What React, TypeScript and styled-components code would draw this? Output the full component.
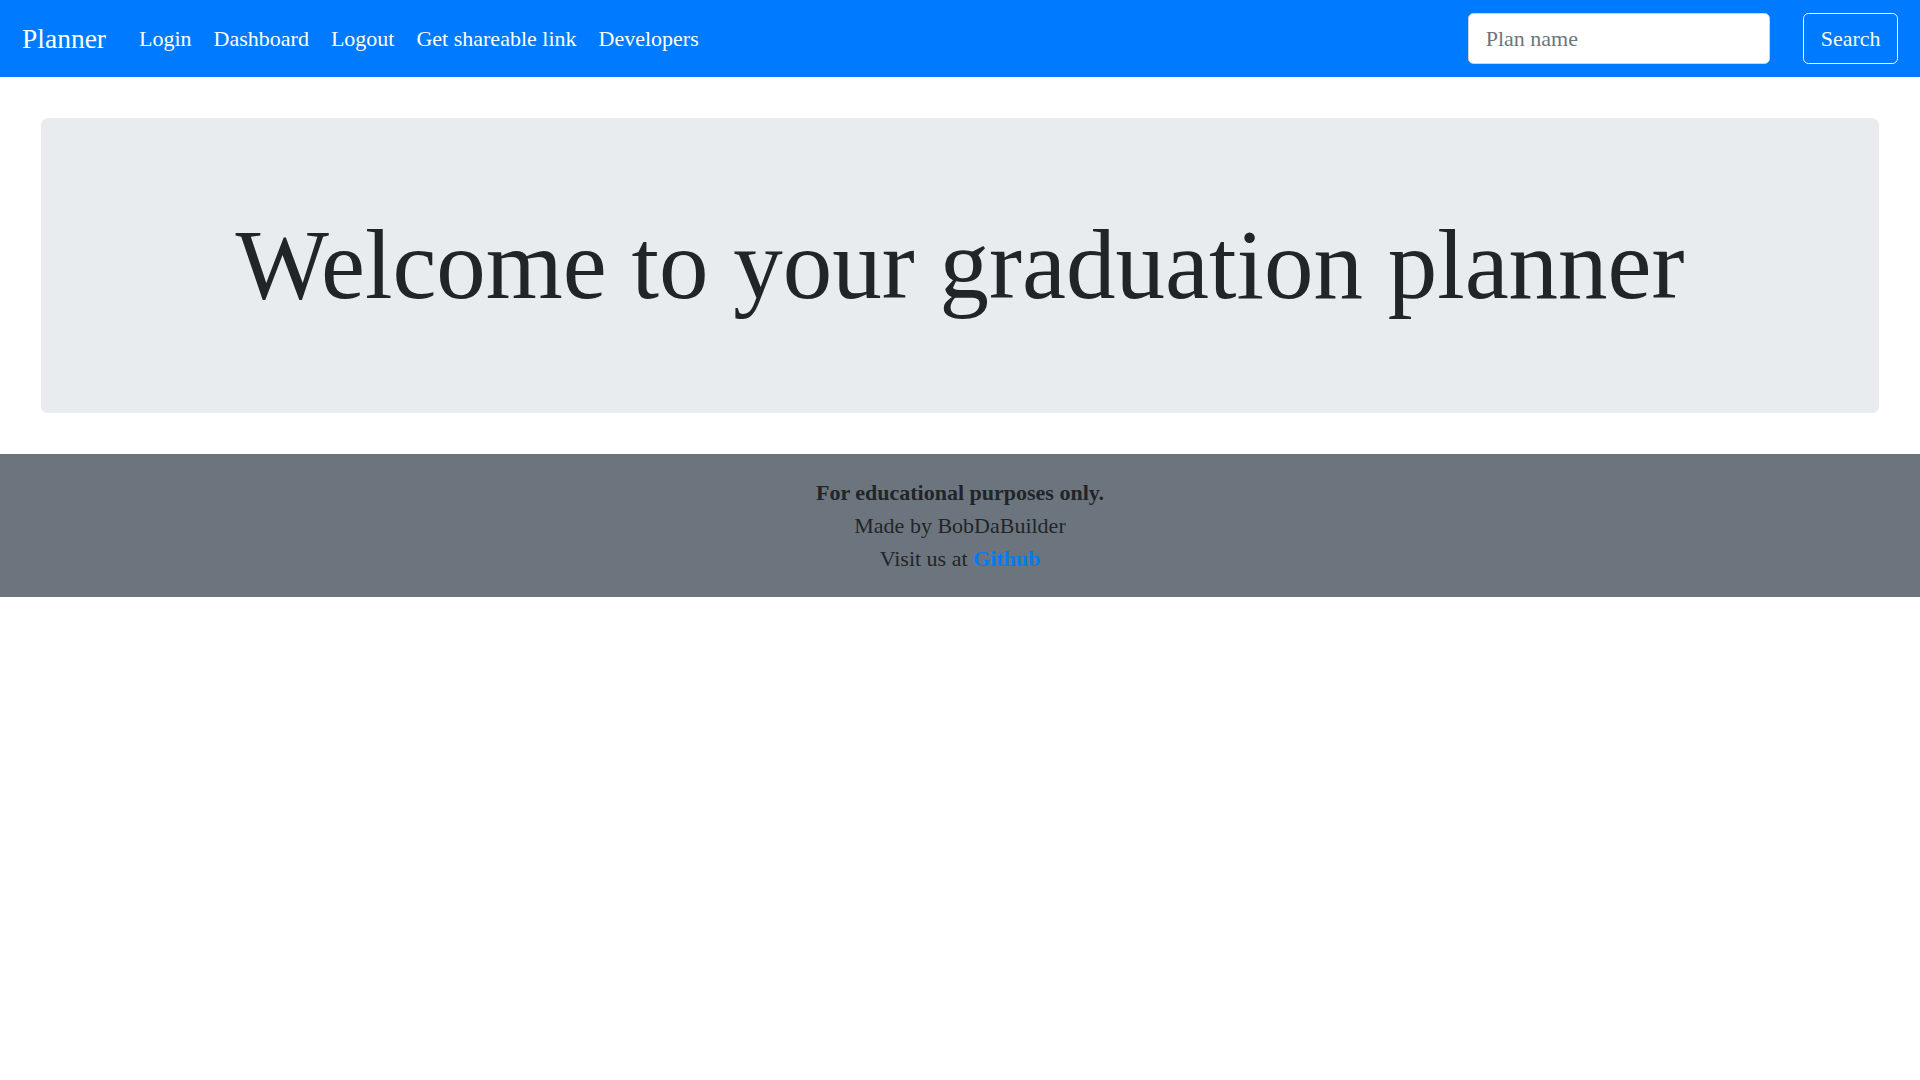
import React from "react";
import styled, { createGlobalStyle } from "styled-components";

const GlobalStyle = createGlobalStyle`
  html, body {
    margin: 0;
    padding: 0;
    background: #ffffff;
  }
  body {
    font-family: "Liberation Serif", "Times New Roman", serif;
    font-size: 22px;
    line-height: 1.5;
    color: #212529;
  }
  * { box-sizing: border-box; }
`;

const NavBar = styled.nav`
  display: flex;
  align-items: center;
  justify-content: space-between;
  background: #007bff;
  padding: 11px 22px;
  height: 77px;
`;

const NavLeft = styled.div`
  display: flex;
  align-items: center;
`;

const Brand = styled.a`
  color: #ffffff;
  font-size: 27.5px;
  line-height: 41.25px;
  padding: 6.875px 0;
  margin-right: 22px;
  text-decoration: none;
  white-space: nowrap;
`;

const NavLinks = styled.ul`
  display: flex;
  list-style: none;
  margin: 0;
  padding: 0;
`;

const NavLink = styled.a`
  display: block;
  color: #ffffff;
  padding: 11px;
  line-height: 33px;
  text-decoration: none;
  white-space: nowrap;
`;

const SearchForm = styled.form`
  display: flex;
  align-items: center;
  gap: 33px;
`;

const SearchInput = styled.input`
  width: 302px;
  height: 51.5px;
  padding: 8.25px 16.5px;
  font-family: "Liberation Serif", "Times New Roman", serif;
  font-size: 22px;
  line-height: 1.5;
  color: #495057;
  background: #ffffff;
  border: 1px solid #ced4da;
  border-radius: 5.5px;
  outline: none;
  &::placeholder {
    color: #6c757d;
    opacity: 1;
  }
`;

const SearchButton = styled.button`
  height: 51.5px;
  padding: 8.25px 16.5px;
  font-family: "Liberation Serif", "Times New Roman", serif;
  font-size: 22px;
  line-height: 1.5;
  color: #f8f9fa;
  background: transparent;
  border: 1px solid #f8f9fa;
  border-radius: 5.5px;
  cursor: pointer;
`;

const Jumbotron = styled.section`
  margin: 41px;
  padding: 88px 44px;
  background: #e9ecef;
  border-radius: 6.6px;
  text-align: center;
`;

const Heading = styled.h1`
  margin: 0;
  font-size: 99px;
  font-weight: 400;
  line-height: 1.2;
  color: #212529;
`;

const Footer = styled.footer`
  background: #6c757d;
  padding: 22px;
  text-align: center;
  color: #212529;
`;

const FooterLine = styled.p<{ $bold?: boolean }>`
  margin: 0;
  line-height: 33px;
  font-weight: ${(p) => (p.$bold ? 700 : 400)};
`;

const FooterLink = styled.a`
  color: #007bff;
  font-weight: 700;
  text-decoration: none;
`;

export default function App() {
  const links = ["Login", "Dashboard", "Logout", "Get shareable link", "Developers"];
  return (
    <>
      <GlobalStyle />
      <NavBar>
        <NavLeft>
          <Brand href="#">Planner</Brand>
          <NavLinks>
            {links.map((l) => (
              <li key={l}>
                <NavLink href="#">{l}</NavLink>
              </li>
            ))}
          </NavLinks>
        </NavLeft>
        <SearchForm onSubmit={(e) => e.preventDefault()}>
          <SearchInput type="search" placeholder="Plan name" />
          <SearchButton type="submit">Search</SearchButton>
        </SearchForm>
      </NavBar>
      <Jumbotron>
        <Heading>Welcome to your graduation planner</Heading>
      </Jumbotron>
      <Footer>
        <FooterLine $bold>For educational purposes only.</FooterLine>
        <FooterLine>Made by BobDaBuilder</FooterLine>
        <FooterLine>
          Visit us at <FooterLink href="#">Github</FooterLink>
        </FooterLine>
      </Footer>
    </>
  );
}
